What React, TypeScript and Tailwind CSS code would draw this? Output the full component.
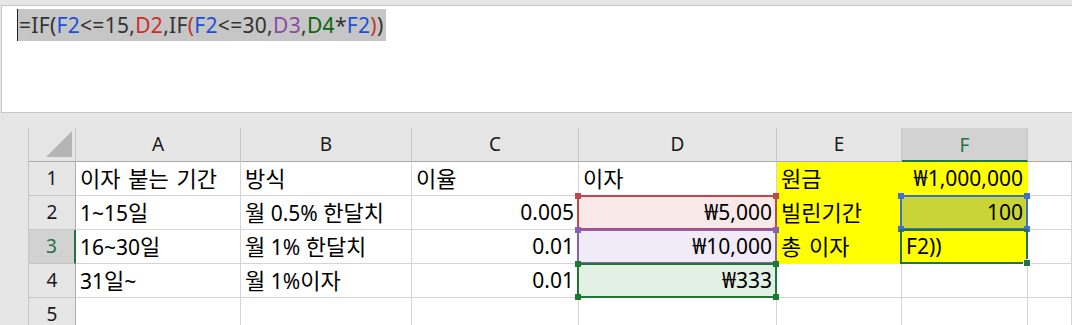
import React from 'react';

const FONT = { fontFamily: '"Noto Sans", "Noto Sans CJK KR", sans-serif' };

type Cell = {
  text?: string;
  align?: 'left' | 'right';
  fill?: string;
  ring?: 'red' | 'purple' | 'green' | 'blue' | 'active';
};

const colLetters = ['A', 'B', 'C', 'D', 'E', 'F', ''];

const rows: Cell[][] = [
  [
    { text: '이자 붙는 기간' },
    { text: '방식' },
    { text: '이율' },
    { text: '이자' },
    { text: '원금', fill: 'bg-[#ffff00] border-[#ffff00]' },
    { text: '₩1,000,000', align: 'right', fill: 'bg-[#ffff00] border-[#ffff00]' },
    {},
  ],
  [
    { text: '1~15일' },
    { text: '월 0.5% 한달치' },
    { text: '0.005', align: 'right' },
    { text: '₩5,000', align: 'right', fill: 'bg-[#f8e9e8]', ring: 'red' },
    { text: '빌린기간', fill: 'bg-[#ffff00] border-[#ffff00]' },
    { text: '100', align: 'right', fill: 'bg-[#c9d537]', ring: 'blue' },
    {},
  ],
  [
    { text: '16~30일' },
    { text: '월 1% 한달치' },
    { text: '0.01', align: 'right' },
    { text: '₩10,000', align: 'right', fill: 'bg-[#f0ebf7]', ring: 'purple' },
    { text: '총 이자', fill: 'bg-[#ffff00] border-[#ffff00]' },
    { text: 'F2))', fill: 'bg-[#ffff00]', ring: 'active' },
    {},
  ],
  [
    { text: '31일~' },
    { text: '월 1%이자' },
    { text: '0.01', align: 'right' },
    { text: '₩333', align: 'right', fill: 'bg-[#e3f0e4]', ring: 'green' },
    {},
    {},
    {},
  ],
  [{}, {}, {}, {}, {}, {}, {}],
];

const ringStyle: Record<string, { line: string; dot: string; bottom: boolean }> = {
  red: { line: 'border-[#c0464a]', dot: 'bg-[#c0464a]', bottom: false },
  purple: { line: 'border-[#8460b8]', dot: 'bg-[#8460b8]', bottom: false },
  green: { line: 'border-[#1c7a30]', dot: 'bg-[#1c7a30]', bottom: true },
  blue: { line: 'border-[#3f6fcf]', dot: 'bg-[#3f6fcf]', bottom: true },
};

// hangul in the sheet font runs a bit wider than Noto CJK, so it gets a bump
const CellText = ({ text }: { text: string }) => {
  const parts = text.split(/([\uAC00-\uD7A3]+(?: [\uAC00-\uD7A3]+)*)/);
  return (
    <span className="whitespace-nowrap">
      {parts.map((p, i) =>
        /[\uAC00-\uD7A3]/.test(p) ? (
          <span key={i} className="text-[22px] [word-spacing:2px]">{p}</span>
        ) : (
          <React.Fragment key={i}>{p}</React.Fragment>
        )
      )}
    </span>
  );
};

const Handle = ({ pos, color }: { pos: string; color: string }) => (
  <span className={`absolute z-20 h-[6px] w-[6px] ${pos} ${color}`} />
);

const Ring = ({ kind }: { kind: NonNullable<Cell['ring']> }) => {
  if (kind === 'active') {
    return (
      <div className="pointer-events-none absolute -left-[2px] -top-[1px] right-[-1px] bottom-[-1px] z-10 border-2 border-[#217346]">
        <span className="absolute -bottom-[4px] -right-[4px] h-[6px] w-[6px] bg-[#217346] outline outline-1 outline-white" />
      </div>
    );
  }
  const s = ringStyle[kind];
  return (
    <div className={`pointer-events-none absolute -left-[2px] -top-[1px] right-[-1px] bottom-[-1px] z-10 border-2 ${s.line}`}>
      <Handle pos="-left-[4px] -top-[4px]" color={s.dot} />
      <Handle pos="-right-[4px] -top-[4px]" color={s.dot} />
      {s.bottom && <Handle pos="-left-[4px] -bottom-[4px]" color={s.dot} />}
      {s.bottom && <Handle pos="-right-[4px] -bottom-[4px]" color={s.dot} />}
    </div>
  );
};

const Formula = () => (
  <div className="ml-[1px] h-[108px] border border-r-0 border-[#c6c6c6] bg-white pl-[15px] pt-[3px]">
    <div className="inline-flex h-[32px] items-center border-l border-[#222] text-[21px] leading-[32px] text-[#333]">
      <span className="bg-[#c6c6c6] pl-px pr-[2px] tracking-[0.3px]">
        =IF(<span className="text-[#1f4fd8]">F2</span>&lt;=15,<span className="text-[#d22a2a]">D2</span>,IF
        <span className="text-[#c0392b]">(</span>
        <span className="text-[#1f4fd8]">F2</span>&lt;=30,<span className="text-[#8e4aa0]">D3</span>,
        <span className="text-[#0d650d]">D4</span>*<span className="text-[#1f4fd8]">F2</span>
        <span className="text-[#c0392b]">)</span>)
      </span>
    </div>
  </div>
);

export default function App() {
  return (
    <div className="h-[325px] w-[1072px] overflow-hidden bg-[#e6e6e6]" style={FONT}>
      <div className="h-[5px]" />
      <Formula />
      <div className="h-[15px]" />

      <div className="grid grid-cols-[48px_165px_171px_167px_198px_125px_126px_1fr] pl-[28px]">
        {/* column headers */}
        <div className="relative h-[34px] border-b border-l border-r border-[#ababab] border-l-[#c6c6c6] border-r-[#c6c6c6] bg-[#e6e6e6]">
          <svg className="absolute bottom-[4px] right-[3px]" width="26" height="26" viewBox="0 0 26 26">
            <polygon points="26,0 26,26 0,26" fill="#b5b5b5" />
          </svg>
        </div>
        {colLetters.map((c, i) =>
          c === 'F' ? (
            <div
              key={i}
              className="flex h-[34px] items-center justify-center border-b-2 border-r border-b-[#217346] border-r-[#c6c6c6] bg-[#d2d2d2] pt-[2px] text-[19px] text-[#217346]"
            >
              {c}
            </div>
          ) : (
            <div
              key={i}
              className={`flex h-[34px] items-center justify-center border-b border-b-[#ababab] bg-[#e6e6e6] text-[19px] text-[#1a1a1a] ${i < 6 ? 'border-r border-r-[#c6c6c6]' : ''}`}
            >
              {c}
            </div>
          )
        )}

        {rows.map((row, r) => (
          <React.Fragment key={r}>
            <div
              className={`flex h-[34px] items-center justify-center border-b border-l border-b-[#c6c6c6] border-l-[#c6c6c6] text-[19px] ${
                r === 2
                  ? 'border-r-2 border-r-[#217346] bg-[#d2d2d2] text-[#217346]'
                  : 'border-r border-r-[#ababab] bg-[#e6e6e6] text-[#1a1a1a]'
              }`}
            >
              {r + 1}
            </div>
            {row.map((cell, c) => (
              <div
                key={c}
                className={`relative flex h-[34px] items-center border-b border-r px-[4px] text-[21px] text-black ${
                  cell.align === 'right' ? 'justify-end' : 'justify-start'
                } ${cell.fill ? cell.fill : 'border-[#d4d4d4] bg-white'} ${
                  cell.fill && !cell.fill.includes('border-') ? 'border-[#d4d4d4]' : ''
                }`}
              >
                {cell.text && <CellText text={cell.text} />}
                {cell.ring && <Ring kind={cell.ring} />}
              </div>
            ))}
          </React.Fragment>
        ))}
      </div>
    </div>
  );
}
